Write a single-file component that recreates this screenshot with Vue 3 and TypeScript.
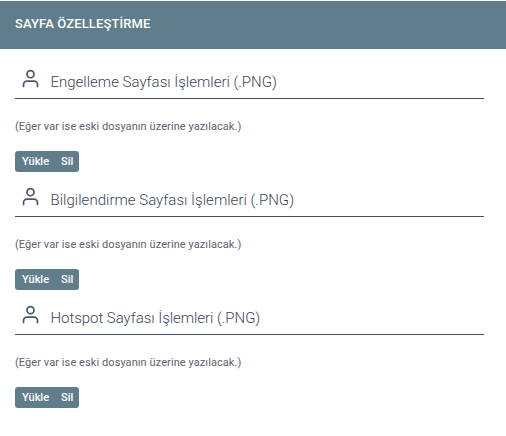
<script setup lang="ts">
interface Section {
  id: string
  title: string
}

const note = '(Eğer var ise eski dosyanın üzerine yazılacak.)'
const sections: Section[] = [
  { id: 'block', title: 'Engelleme Sayfası İşlemleri (.PNG)' },
  { id: 'info', title: 'Bilgilendirme Sayfası İşlemleri (.PNG)' },
  { id: 'hotspot', title: 'Hotspot Sayfası İşlemleri (.PNG)' },
]
</script>

<template>
  <main class="panel">
    <header class="panel-header"><h1>SAYFA ÖZELLEŞTİRME</h1></header>
    <div class="panel-body">
      <section v-for="section in sections" :key="section.id" class="section">
        <div class="section-head">
          <svg class="user-icon" viewBox="0 0 24 24" aria-hidden="true">
            <path d="M20 21v-2a4 4 0 0 0-4-4H8a4 4 0 0 0-4 4v2" />
            <circle cx="12" cy="7" r="4" />
          </svg>
          <h2 :class="section.id">{{ section.title }}</h2>
        </div>
        <p class="note">{{ note }}</p>
        <div class="actions">
          <button type="button" class="upload">Yükle</button>
          <button type="button" class="remove">Sil</button>
        </div>
      </section>
    </div>
  </main>
</template>

<style>
body {
  margin: 0;
  background: #fff;
}
</style>

<style scoped>
.panel {
  box-sizing: border-box;
  height: 436px;
  padding-top: 1px;
  overflow: hidden;
  font-family: Roboto, "Noto Sans", sans-serif;
  color: #435066;
}
.panel-header {
  box-sizing: border-box;
  height: 48px;
  padding: 15px 15px 0;
  background: #607d8c;
}
h1 {
  margin: 0;
  color: #fff;
  font-size: 13px;
  font-weight: 500;
  line-height: 16px;
  letter-spacing: 0.12px;
  white-space: nowrap;
}
.panel-body {
  padding: 14px 22px 0 15px;
}
.section {
  height: 118px;
}
.section-head {
  box-sizing: border-box;
  display: flex;
  height: 36px;
  padding: 5px 0 0 5px;
  border-bottom: 1px solid #435066;
}
.user-icon {
  flex: none;
  width: 21px;
  height: 21px;
  margin-right: 9.5px;
  fill: none;
  stroke: #4c596c;
  stroke-width: 2;
  stroke-linecap: round;
  stroke-linejoin: round;
}
h2 {
  margin: 5px 0 0;
  color: #3b465a;
  font-size: 15px;
  font-weight: 300;
  line-height: 18px;
  white-space: nowrap;
}
.info {
  letter-spacing: 0.02px;
}
.hotspot {
  letter-spacing: -0.04px;
}
.note {
  margin: 20px 0 0;
  color: #5b6270;
  font-size: 11px;
  font-weight: 400;
  line-height: 16px;
  letter-spacing: 0.08px;
  white-space: nowrap;
}
.actions {
  display: flex;
  width: 64px;
  height: 21px;
  margin-top: 16px;
  overflow: hidden;
  border-radius: 3px;
  background: #607d8c;
}
button {
  margin: 0;
  padding: 0 0 0 7px;
  border: 0;
  background: transparent;
  color: #fff;
  font: 500 11px/21px Roboto, "Noto Sans", sans-serif;
  text-align: left;
}
.upload {
  width: 39px;
}
.remove {
  width: 25px;
}
</style>
